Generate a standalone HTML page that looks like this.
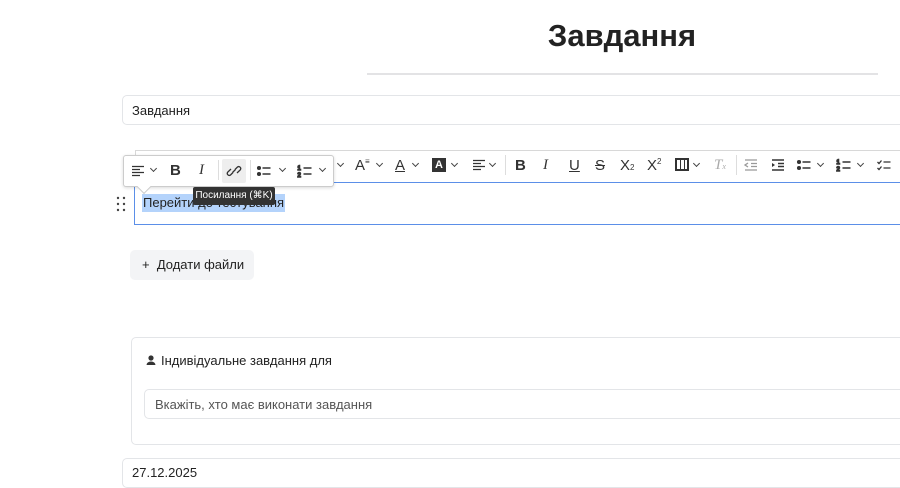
<!DOCTYPE html>
<html><head><meta charset="utf-8"><style>
*{box-sizing:border-box;margin:0;padding:0}
body{width:900px;height:471px;overflow:hidden;background:#fff;font-family:"Liberation Sans",sans-serif;color:#222;position:relative}
.a{position:absolute}
.ic{position:absolute;font-size:15px;color:#333;line-height:1}
.ch{position:absolute;width:5px;height:5px;border-right:1.3px solid #444;border-bottom:1.3px solid #444;transform:rotate(45deg)}
.sep{position:absolute;width:1px;height:20px;background:#ddd}
svg.s{position:absolute;width:16px;height:16px;fill:none;stroke:#333;stroke-width:1.5}
</style></head><body>
<svg width="0" height="0" style="position:absolute">
<defs>
<symbol id="al" viewBox="0 0 16 16"><path d="M2 3.5h12M2 6.5h8M2 9.5h12M2 12.5h8" stroke="#333" stroke-width="1.3"/></symbol>
<symbol id="ul" viewBox="0 0 16 16"><circle cx="3" cy="5" r="1.3" fill="#333"/><circle cx="3" cy="11" r="1.3" fill="#333"/><path d="M6.5 5h8M6.5 11h8" stroke="#333" stroke-width="1.5"/></symbol>
<symbol id="ol" viewBox="0 0 16 16"><text x="0.5" y="7" font-size="6" fill="#333" font-family="Liberation Sans">1</text><text x="0.5" y="14" font-size="6" fill="#333" font-family="Liberation Sans">2</text><path d="M6.5 5h8M6.5 11h8" stroke="#333" stroke-width="1.5"/></symbol>
</defs></svg>

<div class="a" style="left:520px;top:18px;width:204px;text-align:center;font-size:31px;font-weight:bold;color:#222">Завдання</div>
<div class="a" style="left:367px;top:73px;width:511px;height:2px;background:#e3e3e5"></div>
<div class="a" style="left:122px;top:95px;width:800px;height:30px;border:1px solid #e3e5e8;border-radius:5px;font-size:13px;padding:7px 9px">Завдання</div>

<div class="a" style="left:135px;top:150px;width:800px;height:33px;border:1px solid #d8d8d8;border-bottom:none;background:#fff"></div>
<div class="a" style="left:134px;top:182px;width:800px;height:43px;border:1px solid #5b8fe8;border-right:none"></div>
<div class="ch" style="left:338px;top:161px"></div>
<div class="ic" style="left:355px;top:158px;font-size:15px">A<sup style="font-size:8px">≡</sup></div>
<div class="ch" style="left:377px;top:161px"></div>
<div class="ic" style="left:395px;top:158px;text-decoration:underline">A</div>
<div class="ch" style="left:413px;top:161px"></div>
<div class="a" style="left:432px;top:158px;width:14px;height:14px;background:#333;color:#fff;font-size:11px;text-align:center;line-height:14px;font-weight:bold">A</div>
<div class="ch" style="left:452px;top:161px"></div>
<svg class="s" style="left:471px;top:157px"><use href="#al"/></svg>
<div class="ch" style="left:490px;top:161px"></div>
<div class="sep" style="left:505px;top:155px"></div>
<div class="ic" style="left:515px;top:158px;font-weight:bold">B</div>
<div class="ic" style="left:543px;top:158px;font-style:italic;font-family:'Liberation Serif'">I</div>
<div class="ic" style="left:569px;top:158px;text-decoration:underline">U</div>
<div class="ic" style="left:595px;top:158px;text-decoration:line-through">S</div>
<div class="ic" style="left:620px;top:158px">X<span style="font-size:8px">2</span></div>
<div class="ic" style="left:647px;top:158px">X<sup style="font-size:8px">2</sup></div>
<div class="a" style="left:675px;top:158px;width:14px;height:13px;border:2px solid #333;background:repeating-linear-gradient(90deg,transparent 0 3px,#333 3px 4px)"></div>
<div class="ch" style="left:694px;top:161px"></div>
<div class="ic" style="left:714px;top:158px;color:#aaa;font-style:italic;font-family:'Liberation Serif'">T<span style="font-size:8px">x</span></div>
<div class="sep" style="left:736px;top:155px"></div>
<svg class="s" style="left:743px;top:157px"><path d="M2 3h12M8 6.5h6M8 9.5h6M2 13h12M5 6l-3 2 3 2" stroke="#999" stroke-width="1.3"/></svg>
<svg class="s" style="left:770px;top:157px"><path d="M2 3h12M8 6.5h6M8 9.5h6M2 13h12" stroke="#333" stroke-width="1.5"/><path d="M2 6l3 2-3 2z" fill="#333" stroke="none"/></svg>
<svg class="s" style="left:796px;top:157px"><use href="#ul"/></svg>
<div class="ch" style="left:818px;top:161px"></div>
<svg class="s" style="left:836px;top:157px"><use href="#ol"/></svg>
<div class="ch" style="left:858px;top:161px"></div>
<svg class="s" style="left:876px;top:157px"><path d="M1.5 5l1.5 1.5 2.5-3M1.5 11l1.5 1.5 2.5-3M7.5 5h7M7.5 11h7" stroke="#333" stroke-width="1.3"/></svg>

<div class="a" style="left:142px;top:194px;height:18px;background:#b4d3fb;font-size:13px;padding:2px 1px;line-height:14px">Перейти до тестування</div>
<svg class="a" style="left:116px;top:196px" width="10" height="16"><g fill="#444"><circle cx="2" cy="2" r="1.2"/><circle cx="8" cy="2" r="1.2"/><circle cx="2" cy="8" r="1.2"/><circle cx="8" cy="8" r="1.2"/><circle cx="2" cy="14" r="1.2"/><circle cx="8" cy="14" r="1.2"/></g></svg>

<div class="a" style="left:123px;top:155px;width:211px;height:32px;background:#fff;border:1px solid #ccc;border-radius:3px;box-shadow:0 1px 3px rgba(0,0,0,.15)"></div>
<div class="a" style="left:139px;top:182px;width:10px;height:10px;background:#fff;border-right:1px solid #ccc;border-bottom:1px solid #ccc;transform:rotate(45deg)"></div>
<svg class="s" style="left:130px;top:163px"><use href="#al"/></svg>
<div class="ch" style="left:151px;top:166px"></div>
<div class="ic" style="left:170px;top:163px;font-weight:bold">B</div>
<div class="ic" style="left:199px;top:163px;font-style:italic;font-family:'Liberation Serif'">I</div>
<div class="sep" style="left:218px;top:160px"></div>
<div class="a" style="left:222px;top:159px;width:24px;height:24px;background:#eee;border-radius:2px"></div>
<svg class="s" style="left:226px;top:163px"><path d="M7 9.5l-2.5 2.5a2 2 0 0 1-2.8-2.8L5 6M9 6.5l2.5-2.5a2 2 0 0 1 2.8 2.8L11 10M6.5 9.5l3-3" stroke="#333" stroke-width="1.3"/></svg>
<div class="sep" style="left:250px;top:160px"></div>
<svg class="s" style="left:256px;top:163px"><use href="#ul"/></svg>
<div class="ch" style="left:280px;top:166px"></div>
<svg class="s" style="left:297px;top:163px"><use href="#ol"/></svg>
<div class="ch" style="left:320px;top:166px"></div>
<div class="a" style="left:193px;top:187px;width:82px;height:18px;background:#333;color:#fff;font-size:10px;line-height:18px;text-align:center;border-radius:2px">Посилання (⌘K)</div>

<div class="a" style="left:130px;top:250px;width:124px;height:30px;background:#f3f4f6;border-radius:5px;font-size:13px;line-height:30px;padding-left:12px;color:#222">+&nbsp; Додати файли</div>

<div class="a" style="left:131px;top:337px;width:800px;height:108px;border:1px solid #e3e5e8;border-radius:5px"></div>
<svg class="a" style="left:146px;top:355px" width="10" height="10"><circle cx="5" cy="3" r="2.6" fill="#333"/><path d="M0.5 10a4.5 3.5 0 0 1 9 0z" fill="#333"/></svg>
<div class="a" style="left:161px;top:353px;font-size:13px;line-height:16px">Індивідуальне завдання для</div>
<div class="a" style="left:144px;top:389px;width:780px;height:30px;border:1px solid #e3e5e8;border-radius:5px;font-size:13px;padding:7px 10px;color:#555">Вкажіть, хто має виконати завдання</div>
<div class="a" style="left:122px;top:458px;width:800px;height:30px;border:1px solid #e3e5e8;border-radius:5px;font-size:13px;padding:6px 9px">27.12.2025</div>
</body></html>
